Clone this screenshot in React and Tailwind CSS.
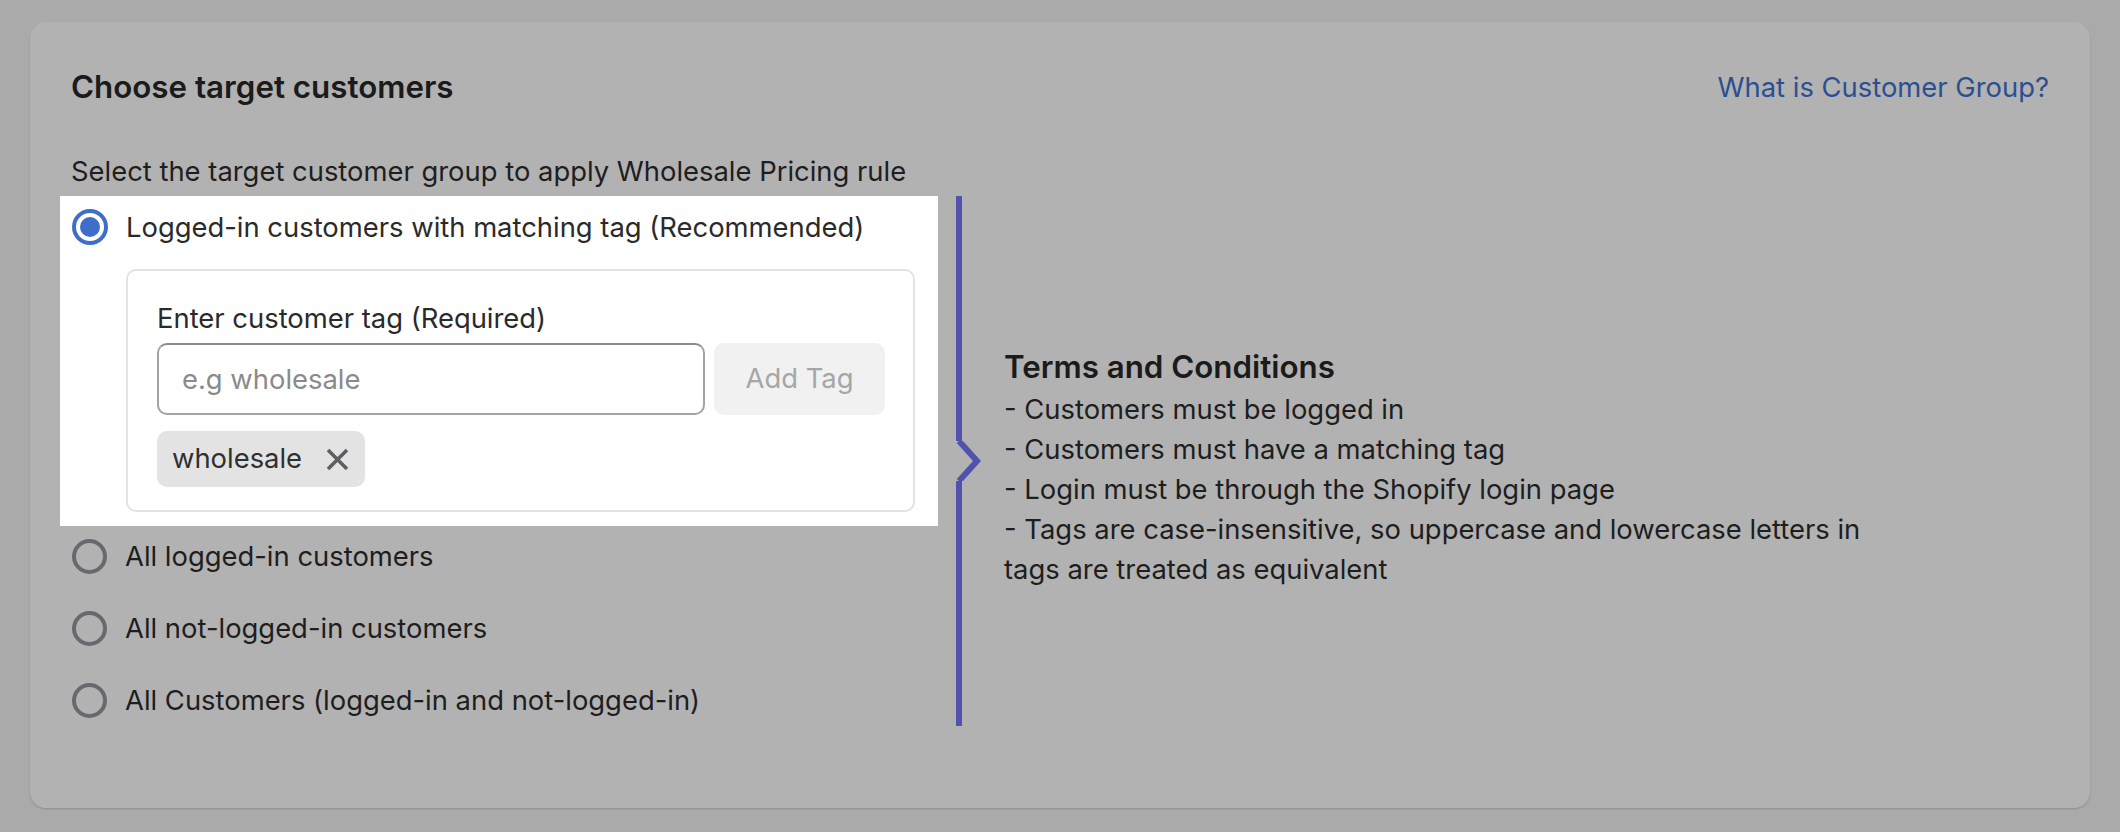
import React, { useState } from 'react';

const font = { fontFamily: 'Inter, "Noto Sans", sans-serif' };

function Radio({ checked }) {
  if (checked) {
    return (
      <span className="flex h-[36px] w-[36px] shrink-0 items-center justify-center rounded-full border-[4px] border-[#3f6dca] bg-white">
        <span className="h-[20px] w-[20px] rounded-full bg-[#3f6dca]" />
      </span>
    );
  }
  return <span className="h-[35px] w-[35px] shrink-0 rounded-full border-[4px] border-[#66696e]" />;
}

function Option({ label, checked }) {
  return (
    <label className="flex h-[40px] cursor-pointer items-center gap-[18px] pl-[12px]">
      <Radio checked={checked} />
      <span className="text-[27.4px] leading-[40px] text-[#1e1e1e]">{label}</span>
    </label>
  );
}

export default function App() {
  const [tags, setTags] = useState(['wholesale']);
  const [value, setValue] = useState('');

  const terms = [
    '- Customers must be logged in',
    '- Customers must have a matching tag',
    '- Login must be through the Shopify login page',
    '- Tags are case-insensitive, so uppercase and lowercase letters in tags are treated as equivalent',
  ];

  return (
    <div className="min-h-[832px] w-full bg-[#aaaaaa] px-[30px] pt-[22px]" style={font}>
      <div className="h-[786px] rounded-[16px] bg-[#b2b2b2] pl-[41px] pr-[41px] pt-[45px] shadow-[0_1px_2px_rgba(0,0,0,0.18)]">
        {/* Header */}
        <div className="flex items-center justify-between">
          <h2 className="text-[31.3px] font-semibold leading-[40px] text-[#1b1b1b]">Choose target customers</h2>
          <a className="cursor-pointer text-[27.4px] leading-[40px] text-[#2b4f93]">What is Customer Group?</a>
        </div>

        <p className="mt-[44px] text-[27.4px] leading-[40px] text-[#1e1e1e]">
          Select the target customer group to apply Wholesale Pricing rule
        </p>

        <div className="mt-[5px] flex">
          {/* Options */}
          <div className="-ml-[11px] flex w-[878px] flex-col pb-[6px]">
            <div className="bg-white pb-[14px] pl-[12px] pr-[23px] pt-[11px]">
              <label className="flex h-[40px] cursor-pointer items-center gap-[18px]">
                <Radio checked />
                <span className="text-[27.4px] leading-[40px] text-[#2a2a2a]">
                  Logged-in customers with matching tag (Recommended)
                </span>
              </label>
              <div className="ml-[54px] mt-[22px] rounded-[10px] border-[2px] border-[#e3e3e3] pb-[23px] pl-[29px] pr-[28px] pt-[27px]">
                <div className="text-[27.4px] leading-[40px] text-[#2a2a2a]">Enter customer tag (Required)</div>
                <div className="mt-[5px] flex gap-[9px]">
                  <input
                    value={value}
                    onChange={e => setValue(e.target.value)}
                    placeholder="e.g wholesale"
                    className="h-[72px] w-[548px] rounded-[10px] border-[2px] border-[#a3a3a3] border-t-[#8c8c8c] px-[23px] text-[27.4px] text-[#303030] outline-none placeholder:text-[#8a8a8a]"
                  />
                  <button
                    onClick={() => {
                      if (value.trim()) {
                        setTags([...tags, value.trim()]);
                        setValue('');
                      }
                    }}
                    className="h-[72px] w-[171px] rounded-[10px] bg-[#f1f1f1] text-[27.4px] text-[#a6a6a6]"
                  >
                    Add Tag
                  </button>
                </div>
                <div className="mt-[16px] flex flex-wrap gap-[10px]">
                  {tags.map(t => (
                    <span key={t} className="flex h-[56px] items-center gap-[24px] rounded-[10px] bg-[#e3e3e3] pl-[15px] pr-[16px]">
                      <span className="text-[27.4px] text-[#303030]">{t}</span>
                      <button onClick={() => setTags(tags.filter(x => x !== t))} className="flex items-center">
                        <svg width="23" height="23" viewBox="0 0 23 23" fill="none" stroke="#5f5f62" strokeWidth="3.6" strokeLinecap="butt">
                          <path d="M2 2L21 21M21 2L2 21" />
                        </svg>
                      </button>
                    </span>
                  ))}
                </div>
              </div>
            </div>

            <div className="mt-[10px] flex flex-col gap-[32px]">
              <Option label="All logged-in customers" />
              <Option label="All not-logged-in customers" />
              <Option label="All Customers (logged-in and not-logged-in)" />
            </div>
          </div>

          {/* Divider with chevron */}
          <div className="ml-[18px] flex w-[26px] flex-col">
            <div className="w-[6px] flex-1 bg-[#5052ae]" />
            <svg width="26" height="40" viewBox="0 0 26 40" fill="none" className="shrink-0">
              <path d="M3 0L21 20L3 40" stroke="#5052ae" strokeWidth="6" strokeLinejoin="miter" />
            </svg>
            <div className="w-[6px] flex-1 bg-[#5052ae]" />
          </div>

          {/* Terms */}
          <div className="ml-[22px] flex w-[870px] items-center pt-[12px]">
            <div>
              <h3 className="text-[31.3px] font-semibold leading-[44px] text-[#1b1b1b]">Terms and Conditions</h3>
              {terms.map(t => (
                <p key={t} className="text-[27.4px] leading-[40px] text-[#1e1e1e]">{t}</p>
              ))}
            </div>
          </div>
        </div>
      </div>
    </div>
  );
}
